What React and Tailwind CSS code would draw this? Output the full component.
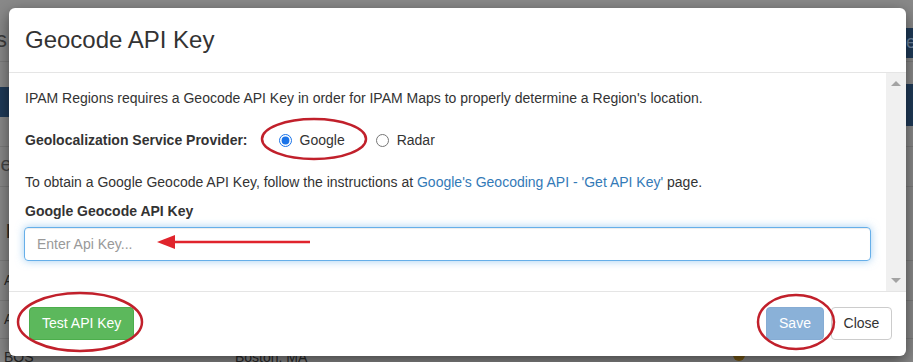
import { useState } from 'react'

const FONT = { fontFamily: '"Liberation Sans", Arial, Helvetica, sans-serif' }

// the dimmed page behind the dialog: only the edges show
function BackgroundPage() {
  return (
    <div className="absolute inset-0 bg-[#898989] text-[#2a2a2a] text-[14px]">
      <div className="h-[62px] border-b border-[#7b7b7b] flex items-start justify-between">
        <div className="mt-[28px] w-[7px] overflow-hidden flex justify-end text-[22px] leading-[24px] text-[#3c3c3c]">
          <span className="whitespace-nowrap">Regions</span>
        </div>
        <div className="mt-[28px] h-[30px] w-[8px] bg-[#1f3a58] text-[#6f86a0] text-[18px] leading-[28px] overflow-hidden">
          <span className="pl-[1px]">e</span>
        </div>
      </div>
      <div className="h-[25px]" />
      <div className="h-[30px] bg-[#1f3a58] flex justify-end">
        <div className="w-[8px] h-[42px] mt-[-3px] bg-[#1f3a58]" />
      </div>
      <div className="h-[30px] border-b border-[#7b7b7b]" />
      <div className="h-[40px] border-b border-[#7b7b7b] flex items-center text-[20px] text-[#444]">
        <span className="ml-[-14px] mt-[-6px]">Re</span>
      </div>
      <div className="h-[74px] border-b border-[#7b7b7b] flex items-end pb-[14px] font-bold text-[20px]">
        <span className="ml-[6px]">I</span>
      </div>
      <div className="h-[40px] border-b border-[#7b7b7b] flex items-center">
        <span className="ml-[4px]">A</span>
      </div>
      <div className="h-[38px] border-b border-[#7b7b7b] flex items-center">
        <span className="ml-[4px]">A</span>
      </div>
      <div className="h-[40px] flex items-start pt-[8px]">
        <span className="ml-[4px] w-[231px]">BOS</span>
        <span>Boston, MA</span>
        <span className="ml-[426px] mt-[2px] w-[12px] h-[12px] rounded-full bg-[#7a5a14]" />
      </div>
    </div>
  )
}

function Radio({ checked, label }) {
  return (
    <label className="flex items-center">
      <input type="radio" name="provider" defaultChecked={checked} className="w-[13px] h-[13px] m-0 accent-[#1a73e8]" />
      <span className="ml-[8px]">{label}</span>
    </label>
  )
}

function Annotations() {
  return (
    <svg className="absolute inset-0 pointer-events-none" width="913" height="362" viewBox="0 0 913 362">
      <g fill="none" stroke="#c1202b" strokeWidth="2.5">
        <ellipse cx="314" cy="139" rx="52" ry="20" />
        <ellipse cx="80" cy="322" rx="62" ry="29" />
        <ellipse cx="796" cy="322" rx="38" ry="27" />
      </g>
      <line x1="172" y1="242" x2="310" y2="242" stroke="#e0242c" strokeWidth="2.5" />
      <polygon points="157,242 175,235 175,249" fill="#e0242c" />
    </svg>
  )
}

export default function App() {
  const [apiKey, setApiKey] = useState('')

  return (
    <div className="relative w-[913px] h-[362px] overflow-hidden" style={FONT}>
      <BackgroundPage />

      {/* dialog */}
      <div className="absolute left-[9px] top-[8px] w-[897px] h-[348px] bg-white rounded-[6px] shadow-[0_5px_15px_rgba(0,0,0,0.5)] flex flex-col text-[14px] text-[#333] overflow-hidden">
        <div className="h-[65px] shrink-0 border-b border-[#e5e5e5] flex items-center px-[16px]">
          <h2 className="text-[24px] leading-none text-[#333]">Geocode API Key</h2>
        </div>

        <div className="h-[218px] shrink-0 flex">
          <div className="flex-1 px-[15px] pt-[15px] leading-[20px]">
            <p className="pl-[1px]">IPAM Regions requires a Geocode API Key in order for IPAM Maps to properly determine a Region's location.</p>
            <div className="mt-[22px] flex items-center pl-[1px]">
              <span className="font-bold">Geolocalization Service Provider:</span>
              <div className="ml-[31px]"><Radio checked label="Google" /></div>
              <div className="ml-[31px]"><Radio label="Radar" /></div>
            </div>
            <p className="mt-[22px] pl-[1px]">
              To obtain a Google Geocode API Key, follow the instructions at{' '}
              <a href="#" className="text-[#337ab7]">Google's Geocoding API - 'Get API Key'</a> page.
            </p>
            <p className="mt-[9px] pl-[1px] font-bold">Google Geocode API Key</p>
            <input
              value={apiKey}
              onChange={e => setApiKey(e.target.value)}
              placeholder="Enter Api Key..."
              className="mt-[6px] w-full h-[34px] px-[12px] rounded-[4px] border border-[#66afe9] outline-none text-[14px] text-[#555] placeholder:text-[#999] shadow-[inset_0_1px_1px_rgba(0,0,0,0.075),0_0_8px_rgba(102,175,233,0.6)]"
            />
          </div>
          <div className="w-[20px] bg-[#f0f0f0] flex flex-col items-center justify-between py-[8px]">
            <span className="w-0 h-0 border-l-[5px] border-r-[5px] border-b-[5px] border-l-transparent border-r-transparent border-b-[#a3a3a3]" />
            <span className="w-0 h-0 border-l-[5px] border-r-[5px] border-t-[5px] border-l-transparent border-r-transparent border-t-[#a3a3a3]" />
          </div>
        </div>

        <div className="flex-1 border-t border-[#e5e5e5] flex items-start justify-between pl-[20px] pr-[14px] pt-[15px]">
          <button className="h-[33px] px-[12px] rounded-[4px] bg-[#5cb85c] border border-[#4cae4c] text-white">Test API Key</button>
          <div className="flex gap-[7px]">
            <button disabled className="h-[33px] w-[58px] rounded-[4px] bg-[#8ab1d8] border border-[#86acd4] text-white">Save</button>
            <button className="h-[33px] w-[61px] rounded-[4px] bg-white border border-[#ccc] text-[#333]">Close</button>
          </div>
        </div>
      </div>

      <Annotations />
    </div>
  )
}
